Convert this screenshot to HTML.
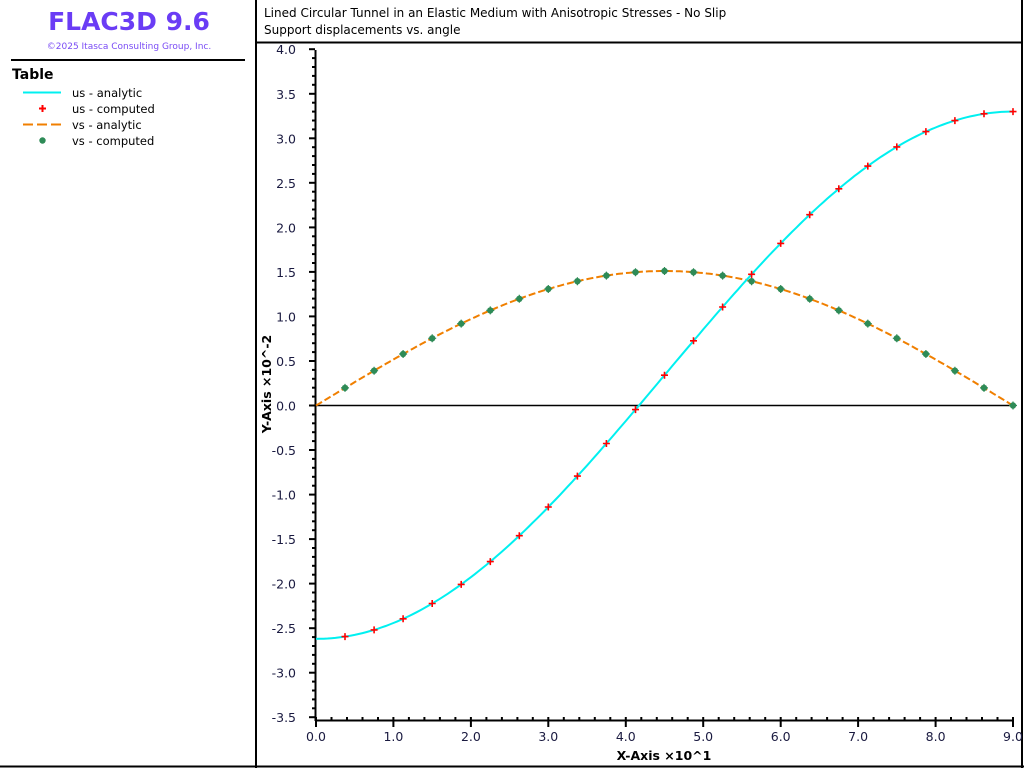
<!DOCTYPE html>
<html><head><meta charset="utf-8"><style>
html,body{margin:0;padding:0;background:#fff;width:1024px;height:768px;overflow:hidden;font-family:"DejaVu Sans","Liberation Sans",sans-serif}
svg text{font-family:"DejaVu Sans","Liberation Sans",sans-serif}
</style></head><body>
<svg id="s" width="1024" height="768" xmlns="http://www.w3.org/2000/svg">
<rect x="0" y="0" width="1024" height="768" fill="#fff"/>
<line x1="256" y1="0" x2="256" y2="768" stroke="#000" stroke-width="2"/>
<line x1="1022" y1="0" x2="1022" y2="768" stroke="#000" stroke-width="2"/>
<line x1="0" y1="766.5" x2="1024" y2="766.5" stroke="#000" stroke-width="2"/>
<line x1="256" y1="42.5" x2="1022" y2="42.5" stroke="#000" stroke-width="2"/>
<text x="129" y="30" text-anchor="middle" font-size="25" font-weight="bold" fill="#6a3cf5">FLAC3D 9.6</text>
<text x="129" y="49" text-anchor="middle" font-size="9" fill="#7a4cf5">©2025 Itasca Consulting Group, Inc.</text>
<line x1="11" y1="60" x2="245" y2="60" stroke="#000" stroke-width="2"/>
<text x="12" y="79" font-size="14" font-weight="bold" fill="#000">Table</text>
<line x1="23" y1="92.5" x2="61" y2="92.5" stroke="#00f0f0" stroke-width="2"/>
<text x="72" y="97" font-size="11.5" fill="#000">us - analytic</text>
<path d="M39 108.5h7M42.5 105v7" stroke="#f00" stroke-width="2"/>
<text x="72" y="113" font-size="11.5" fill="#000">us - computed</text>
<path d="M23 124.5h10M37 124.5h10M51 124.5h10" stroke="#f07f00" stroke-width="2"/>
<text x="72" y="129" font-size="11.5" fill="#000">vs - analytic</text>
<circle cx="42.5" cy="140.5" r="3.2" fill="#2e8b57"/>
<text x="72" y="145" font-size="11.5" fill="#000">vs - computed</text>
<text x="264" y="17" font-size="12" fill="#000">Lined Circular Tunnel in an Elastic Medium with Anisotropic Stresses - No Slip</text>
<text x="264" y="34" font-size="12" fill="#000">Support displacements vs. angle</text>
<line x1="315.5" y1="50" x2="315.5" y2="721" stroke="#000" stroke-width="2"/>
<line x1="315" y1="720.5" x2="1014" y2="720.5" stroke="#000" stroke-width="2"/>
<line x1="315" y1="405.5" x2="1014" y2="405.5" stroke="#000" stroke-width="1.5"/>
<g id="ticks"></g>
<g id="data"></g>
<text x="664" y="760" text-anchor="middle" font-size="12.5" font-weight="bold">X-Axis ×10^1</text>
<text transform="translate(271,384) rotate(-90)" text-anchor="middle" font-size="12.5" font-weight="bold">Y-Axis ×10^-2</text>
</svg>
<script>
function X(t){return 316+t*697/90}
function Y(v){return 405.5-v*89.07}
var g=document.getElementById('ticks'),h='';
for(var i=0;i<=75;i++){var v=-3.5+i*0.1,y=Y(v).toFixed(1),maj=i%5==0;
h+='<line x1="'+(maj?309:312)+'" y1="'+y+'" x2="315" y2="'+y+'" stroke="#000" stroke-width="2"/>';
if(maj)h+='<text x="296" y="'+(+y+5)+'" text-anchor="end" font-size="12.5" fill="#1a1a40">'+v.toFixed(1)+'</text>';}
for(var i=0;i<=45;i++){var x=(316+i*697/45).toFixed(1),maj=i%5==0;
h+='<line x1="'+x+'" y1="717" x2="'+x+'" y2="'+(maj?727:721)+'" stroke="#000" stroke-width="2"/>';
if(maj)h+='<text x="'+x+'" y="741" text-anchor="middle" font-size="12.5" fill="#1a1a40">'+(i/5).toFixed(1)+'</text>';}
g.innerHTML=h;
function us(t){return 0.34-2.96*Math.cos(2*t*Math.PI/180)}
function vs(t){return 1.51*Math.sin(2*t*Math.PI/180)}
var p1='',p2='';
for(var t=0;t<=90;t+=0.5){p1+=(t?'L':'M')+X(t).toFixed(1)+' '+Y(us(t)).toFixed(1);p2+=(t?'L':'M')+X(t).toFixed(1)+' '+Y(vs(t)).toFixed(1);}
var d='<path d="'+p2+'" fill="none" stroke="#f07f00" stroke-width="2" stroke-dasharray="7,3"/>';
d+='<path d="'+p1+'" fill="none" stroke="#00f0f0" stroke-width="2"/>';
for(var k=1;k<=24;k++){var t=k*3.75,x=X(t),y=Y(vs(t));
d+='<circle cx="'+x.toFixed(1)+'" cy="'+y.toFixed(1)+'" r="3.2" fill="#2e8b57"/><path d="M'+(x-4).toFixed(1)+' '+y.toFixed(1)+'h8M'+x.toFixed(1)+' '+(y-4).toFixed(1)+'v8" stroke="#2e8b57" stroke-width="1.2"/>';}
for(var k=1;k<=24;k++){var t=k*3.75,x=X(t),y=Y(us(t));
d+='<path d="M'+(x-3.5).toFixed(1)+' '+y.toFixed(1)+'h7M'+x.toFixed(1)+' '+(y-3.5).toFixed(1)+'v7" stroke="#f00" stroke-width="1.6"/>';}
document.getElementById('data').innerHTML=d;
</script>
</body></html>
